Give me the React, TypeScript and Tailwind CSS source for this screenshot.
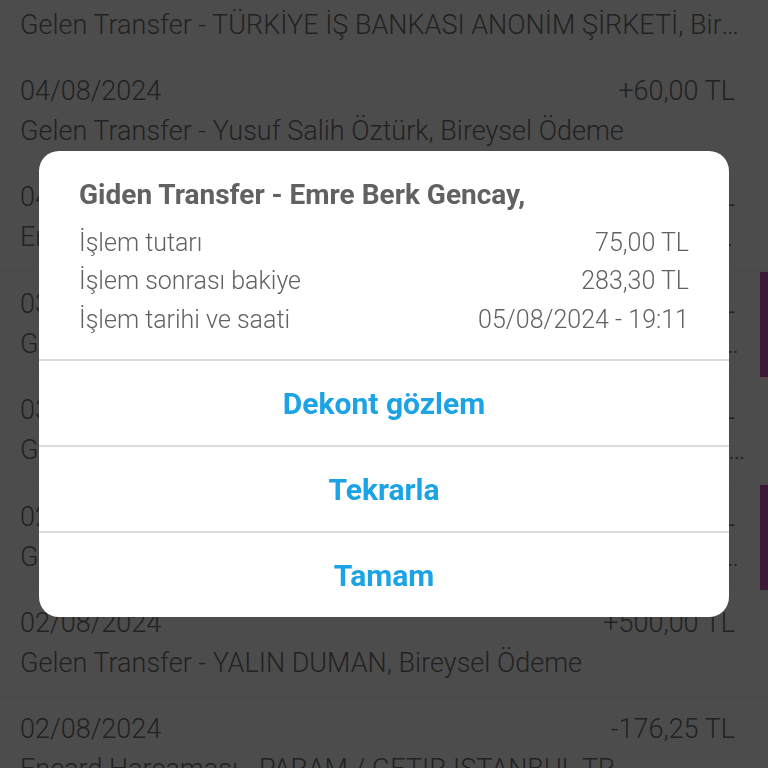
import React from 'react';

type Txn = {
    date: string;
    amount: string;
    description: string;
    flagged?: boolean;
};

const TRANSACTIONS: Txn[] = [
    { date: '05/08/2024', amount: '+100,00 TL', description: 'Gelen Transfer - TÜRKİYE İŞ BANKASI ANONİM ŞİRKETİ, Bireysel Ödeme' },
    { date: '04/08/2024', amount: '+60,00 TL', description: 'Gelen Transfer - Yusuf Salih Öztürk, Bireysel Ödeme' },
    { date: '04/08/2024', amount: '-42,50 TL', description: 'Encard Harcaması - PARAM / GETIR ISTANBUL TR, Market Alışverişi' },
    { date: '03/08/2024', amount: '+250,00 TL', description: 'Gelen Transfer - TÜRKİYE İŞ BANKASI ANONİM ŞİRKETİ, Bireysel Ödeme', flagged: true },
    { date: '03/08/2024', amount: '+35,00 TL', description: 'Gelen Transfer - Mehmet Ali Kaya, Bireysel Ödeme, Kira Payı Gönderimi' },
    { date: '02/08/2024', amount: '+120,00 TL', description: 'Gelen Transfer - TÜRKİYE İŞ BANKASI ANONİM ŞİRKETİ, Bireysel Ödeme', flagged: true },
    { date: '02/08/2024', amount: '+500,00 TL', description: 'Gelen Transfer - YALIN DUMAN, Bireysel Ödeme' },
    { date: '02/08/2024', amount: '-176,25 TL', description: 'Encard Harcaması - PARAM / GETIR ISTANBUL TR' },
];

const DETAILS = [
    { label: 'İşlem tutarı', value: '75,00 TL' },
    { label: 'İşlem sonrası bakiye', value: '283,30 TL' },
    { label: 'İşlem tarihi ve saati', value: '05/08/2024 - 19:11' },
];

const ACTIONS = ['Dekont gözlem', 'Tekrarla', 'Tamam'];

const TxnRow: React.FC<{ txn: Txn }> = ({ txn }) => (
    <div className="flex h-[106.4px] border-b border-[#f6f6f6]">
        <div className="flex-1 min-w-0 pl-5 pr-3 pt-[12px] text-[27px] font-light leading-[40px] text-[#727272]">
            <div className="flex justify-between">
                <span>{txn.date}</span>
                <span className="mr-[13px]">{txn.amount}</span>
            </div>
            <div className="truncate">{txn.description}</div>
        </div>
        <div className={`w-2 shrink-0 ${txn.flagged ? 'bg-[#c258b8]' : 'bg-transparent'}`} />
    </div>
);

const App: React.FC = () => {
    return (
        <div className="relative h-screen overflow-hidden bg-white font-['Roboto','Noto_Sans',sans-serif]">
            <div className="-mt-[47.4px]">
                {TRANSACTIONS.map((t, i) => <TxnRow key={i} txn={t} />)}
            </div>

            <div className="fixed inset-0 z-10 flex items-center justify-center bg-black/70">
                <div className="mx-[39px] w-full overflow-hidden rounded-[20px] bg-white">
                    <div className="px-10 pt-[26px] pb-[20px] text-[#616161]">
                        <h2 className="text-[28px] font-bold leading-[36px]">Giden Transfer - Emre Berk Gencay,</h2>
                        <div className="mt-[11px] text-[25px] font-light leading-[38.5px]">
                            {DETAILS.map(d => (
                                <div key={d.label} className="flex justify-between">
                                    <span>{d.label}</span>
                                    <span>{d.value}</span>
                                </div>
                            ))}
                        </div>
                    </div>
                    {ACTIONS.map(a => (
                        <button key={a} className="flex h-[86px] w-full items-center justify-center border-t-2 border-[#dcdcdc] text-[30px] font-bold text-[#1ba3e6]">
                            {a}
                        </button>
                    ))}
                </div>
            </div>
        </div>
    );
};

export default App;
